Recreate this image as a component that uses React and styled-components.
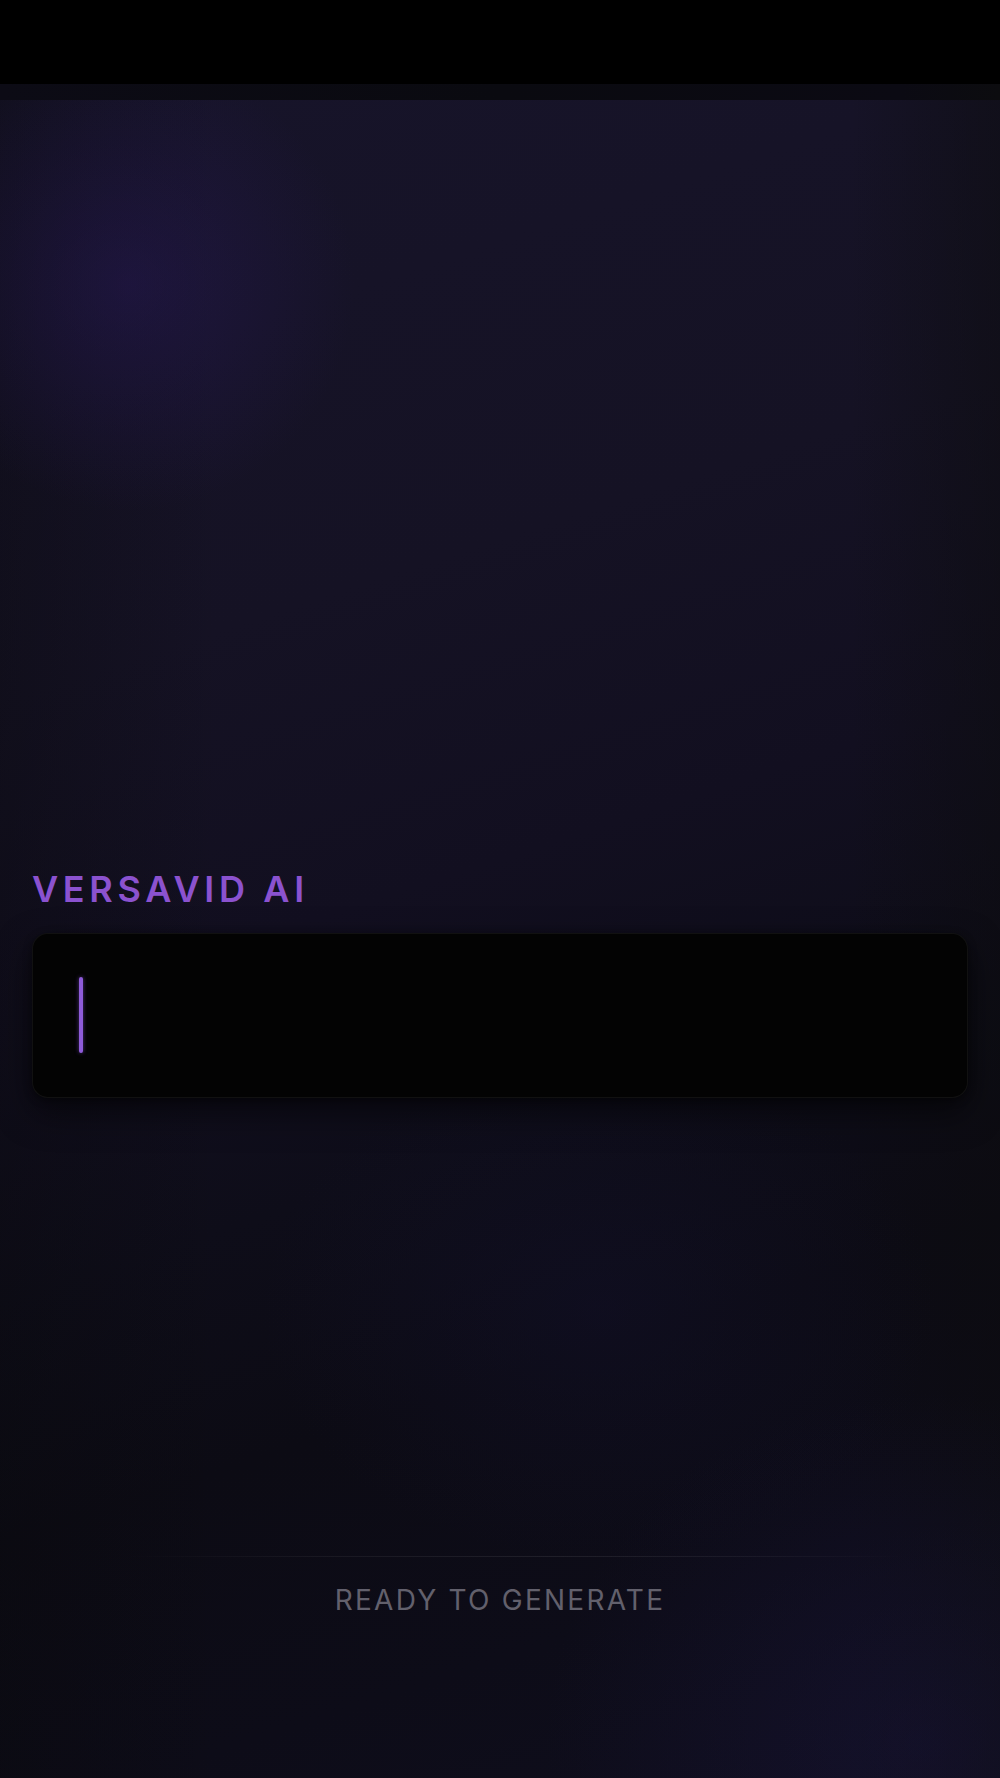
import React from "react";
import styled, { createGlobalStyle } from "styled-components";

const GlobalStyle = createGlobalStyle`
  html, body {
    margin: 0;
    padding: 0;
    background: #000;
  }
  * {
    box-sizing: border-box;
  }
  body {
    font-family: Inter, "Noto Sans", "Liberation Sans", sans-serif;
    -webkit-font-smoothing: antialiased;
  }
`;

const Screen = styled.div`
  min-height: 1778px;
  display: flex;
  flex-direction: column;
  background: #000;
`;

const StatusBar = styled.div`
  height: 84px;
  background: #000;
  flex-shrink: 0;
`;

const HeaderShade = styled.div`
  height: 16px;
  flex-shrink: 0;
  background: linear-gradient(90deg, #0c0b15 0%, #0a0a10 50%, #0b0a13 90%, #0c0c0f 100%);
`;

const Stage = styled.main`
  flex: 1;
  display: flex;
  flex-direction: column;
  padding: 767px 32px 0;
  background:
    radial-gradient(ellipse 30% 18% at 13% 11%, rgba(44, 26, 100, 0.38), transparent 75%),
    radial-gradient(ellipse 50% 28% at 92% 98%, rgba(30, 24, 72, 0.32), transparent 75%),
    radial-gradient(ellipse 45% 20% at 60% 72%, rgba(20, 18, 50, 0.35), transparent 75%),
    linear-gradient(90deg, rgba(8, 8, 11, 0.35) 0%, transparent 22%, transparent 85%, rgba(12, 12, 14, 0.5) 100%),
    linear-gradient(162deg, #17142a 0%, #151224 30%, #120f20 46%, #0e0d19 60%, #0c0b14 72%, #0d0c18 86%, #0f0e1d 100%);
`;

const BrandLabel = styled.h1`
  margin: 0;
  font-family: Inter, "Noto Sans", sans-serif;
  font-size: 36px;
  line-height: 44px;
  font-weight: 600;
  letter-spacing: 0.13em;
  color: #8b52cf;
  text-transform: uppercase;
`;

const PromptField = styled.div`
  margin-top: 22px;
  height: 165px;
  border-radius: 16px;
  background: #030303;
  border: 1px solid rgba(255, 255, 255, 0.06);
  box-shadow: 0 14px 34px rgba(0, 0, 0, 0.55), 0 2px 8px rgba(0, 0, 0, 0.4);
  padding: 43px 46px;
`;

const Caret = styled.span`
  display: block;
  width: 4px;
  height: 76px;
  border-radius: 2px;
  background: #8e5bd9;
  box-shadow: 0 0 4px rgba(140, 90, 220, 0.55);
`;

const Spacer = styled.div`
  height: 458px;
`;

const Divider = styled.div`
  height: 1px;
  margin: 0 60px 0 90px;
  background: linear-gradient(
    90deg,
    transparent 0%,
    rgba(255, 255, 255, 0.05) 25%,
    rgba(255, 255, 255, 0.08) 55%,
    rgba(255, 255, 255, 0.05) 80%,
    transparent 100%
  );
`;

const StatusText = styled.p`
  margin: 26px 0 0;
  text-align: center;
  font-family: Inter, "Noto Sans", sans-serif;
  font-size: 28px;
  line-height: 34px;
  font-weight: 400;
  letter-spacing: 0.08em;
  color: #62606c;
  text-transform: uppercase;
`;

export default function App() {
  return (
    <>
      <GlobalStyle />
      <Screen>
        <StatusBar />
        <HeaderShade />
        <Stage>
          <BrandLabel>VersaVid AI</BrandLabel>
          <PromptField>
            <Caret />
          </PromptField>
          <Spacer />
          <Divider />
          <StatusText>Ready to generate</StatusText>
        </Stage>
      </Screen>
    </>
  );
}
